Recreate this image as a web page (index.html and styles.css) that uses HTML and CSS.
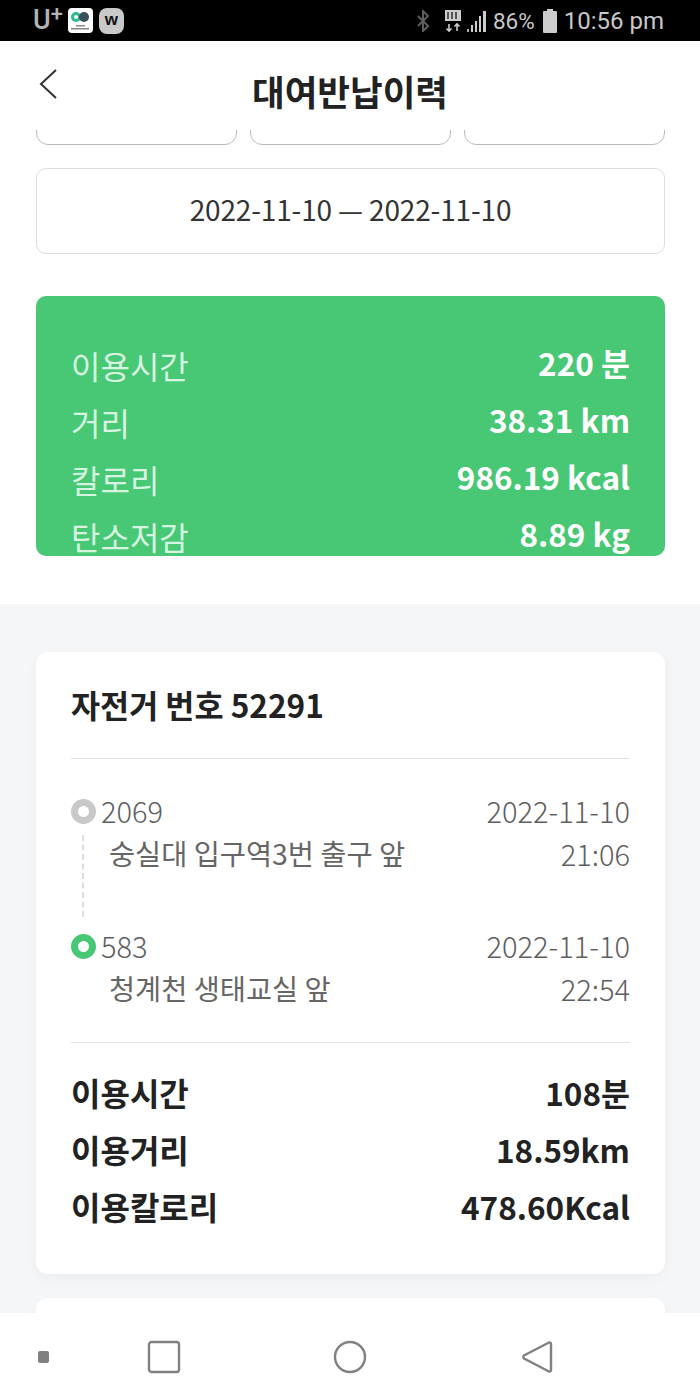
FILE: index.html
```html
<html>
    <head>
        <title>대여반납이력</title>
        <link rel="stylesheet" href="styles.css">
    </head>
    <body>
        <div class="status">
            <div class="status-left">
                <span class="carrier">U<sup>+</sup></span>
                <span class="app-icon">
                    <svg width="24" height="24" viewBox="0 0 24 24">
                        <circle cx="8" cy="8" r="5" fill="#2fb98c"/>
                        <circle cx="8" cy="8" r="2" fill="#fff"/>
                        <circle cx="16" cy="8" r="5" fill="#37505c"/>
                        <rect x="8" y="16" width="9" height="1.5" fill="#888"/>
                        <rect x="3" y="19" width="18" height="1.500" fill="#888"/>
                    </svg>
                </span>
                <span class="w-icon">w</span>
            </div>
            <div class="status-right">
                <svg class="bt" width="14" height="22" viewBox="0 0 14 22">
                    <path d="M2 6l10 10-5 5V1l5 5L2 16" fill="none" stroke="#5e5e5e" stroke-width="2"/>
                </svg>
                <svg class="lte" width="18" height="24" viewBox="0 0 18 24">
                    <rect x="1" y="1" width="16" height="11" fill="#ccc"/>
                    <path d="M4 3v7M8 3v7M12 3v7" stroke="#222" stroke-width="1.4"/>
                    <path d="M5 15v7M2.500 19.500L5 22l2.500-2.500M13 22v-7M10.500 17.500L13 15l2.500 2.500" fill="none" stroke="#ccc" stroke-width="1.6"/>
                </svg>
                <svg class="signal" width="20" height="22" viewBox="0 0 20 22">
                    <rect x="0" y="19" width="2" height="3" fill="#aaa"/>
                    <rect x="4" y="15" width="2" height="7" fill="#ccc"/>
                    <rect x="8" y="11" width="2" height="11" fill="#ccc"/>
                    <rect x="12" y="6" width="2" height="16" fill="#ccc"/>
                    <rect x="16" y="1" width="3" height="21" fill="#ccc"/>
                </svg>
                <span class="pct">86%</span>
                <svg class="battery" width="14" height="24" viewBox="0 0 14 24">
                    <path d="M4 0h6v2h3a1 1 0 0 1 1 1v20a1 1 0 0 1-1 1H1a1 1 0 0 1-1-1V3a1 1 0 0 1 1-1h3z" fill="#ccc"/>
                </svg>
                <span class="clock">10:56 pm</span>
            </div>
        </div>

        <div class="header">
            <svg class="back" width="20" height="32" viewBox="0 0 20 32">
                <path d="M18 2L3 16l15 14" fill="none" stroke="#333" stroke-width="2"/>
            </svg>
            <h1>대여반납이력</h1>
        </div>

        <div class="main">
            <div class="top">
                <div class="filters">
                    <div class="filter"></div>
                    <div class="filter"></div>
                    <div class="filter"></div>
                </div>
                <div class="date-box">2022-11-10 — 2022-11-10</div>
                <div class="total">
                    <div class="total-row"><span class="total-label">이용시간</span><b>220 분</b></div>
                    <div class="total-row"><span class="total-label">거리</span><b>38.31 km</b></div>
                    <div class="total-row"><span class="total-label">칼로리</span><b>986.19 kcal</b></div>
                    <div class="total-row"><span class="total-label">탄소저감</span><b>8.89 kg</b></div>
                </div>
            </div>

            <div class="list">
                <div class="card">
                    <div class="bike">자전거 번호 52291</div>
                    <div class="route">
                        <div class="stop">
                            <div class="stop-line">
                                <span class="dot dot-gray"></span>
                                <span class="stop-no">2069</span>
                                <span class="stop-date">2022-11-10</span>
                            </div>
                            <div class="stop-line stop-sub">
                                <span class="stop-name">숭실대 입구역3번 출구 앞</span>
                                <span class="stop-date">21:06</span>
                            </div>
                            <div class="dash"></div>
                        </div>
                        <div class="stop">
                            <div class="stop-line">
                                <span class="dot dot-green"></span>
                                <span class="stop-no">583</span>
                                <span class="stop-date">2022-11-10</span>
                            </div>
                            <div class="stop-line stop-sub">
                                <span class="stop-name">청계천 생태교실 앞</span>
                                <span class="stop-date">22:54</span>
                            </div>
                        </div>
                    </div>
                    <div class="summary">
                        <div class="summary-row"><span>이용시간</span><span class="summary-value">108분</span></div>
                        <div class="summary-row"><span>이용거리</span><span class="summary-value">18.59km</span></div>
                        <div class="summary-row"><span>이용칼로리</span><span class="summary-value">478.60Kcal</span></div>
                    </div>
                </div>
                <div class="card card-next"></div>
            </div>
        </div>

        <div class="nav">
            <span class="nav-dot"></span>
            <svg class="nav-square" width="34" height="34" viewBox="0 0 34 34">
                <rect x="2" y="2" width="30" height="30" rx="2.500" fill="none" stroke="#808080" stroke-width="2.400"/>
            </svg>
            <svg class="nav-circle" width="34" height="34" viewBox="0 0 34 34">
                <circle cx="17" cy="17" r="15" fill="none" stroke="#808080" stroke-width="2.400"/>
            </svg>
            <svg width="32" height="34" viewBox="0 0 32 34">
                <path d="M28 2.500a1.500 1.500 0 0 1 2 1.500v26a1.500 1.500 0 0 1-2 1.500L3 18.500a2 2 0 0 1 0-3z" fill="none" stroke="#808080" stroke-width="2.400"/>
            </svg>
        </div>
    </body>
</html>
```

FILE: styles.css
```css
body{
    margin: 0;
    width: 700px;
    height: 1400px;
    overflow: hidden;
    display: flex;
    flex-direction: column;
    background: #fff;
    font-family: "Noto Sans CJK KR", "Noto Sans", sans-serif;
    color: #222;
}

/* status bar */
.status{
    height: 41px;
    flex: none;
    background: #000;
    display: flex;
    justify-content: space-between;
    align-items: center;
    padding: 0 36px 0 33px;
    color: #c8c8c8;
}
.status-left, .status-right{
    display: flex;
    align-items: center;
}
.carrier{
    font-family: "Roboto", sans-serif;
    font-size: 27px;
    font-weight: 500;
    line-height: 41px;
    margin-right: 5px;
    color: #b4b4b4;
}
.carrier sup{
    font-size: 22px;
    font-weight: 500;
    line-height: 0;
    vertical-align: 8px;
}
.app-icon{
    width: 25px;
    height: 25px;
    background: #fff;
    border-radius: 4px;
    display: flex;
    align-items: center;
    justify-content: center;
    margin-right: 6px;
}
.w-icon{
    width: 25px;
    height: 26px;
    border-radius: 8px;
    background: #c9c9c9;
    color: #111;
    font: bold 17px/24px "Liberation Sans", sans-serif;
    text-align: center;
}
.bt{ margin-right: 14px; }
.lte{ margin-right: 5px; }
.signal{ margin-right: 6px; }
.pct{
    font: 22.500px "Roboto", sans-serif;
    margin-right: 8px;
}
.battery{ margin-right: 7px; }
.clock{
    font: 24px "Roboto", sans-serif;
}

/* title */
.header{
    height: 89px;
    flex: none;
    position: relative;
    display: flex;
    justify-content: center;
    padding-top: 26px;
    box-sizing: border-box;
}
.header h1{
    margin: 0;
    font-size: 35.500px;
    line-height: 48px;
    font-weight: 700;
    color: #222;
}
.back{
    position: absolute;
    left: 38px;
    top: 27px;
}

.main{
    flex: 1;
    overflow: hidden;
    min-height: 0;
}
.top{
    padding: 0 35px 48px 36px;
}
.filters{
    height: 15px;
    overflow: hidden;
    display: flex;
    gap: 13px;
    align-items: flex-end;
}
.filter{
    flex: 1;
    height: 60px;
    border: 1px solid #bbb;
    border-radius: 12px;
    box-sizing: border-box;
}
.date-box{
    margin-top: 23px;
    height: 86px;
    box-sizing: border-box;
    border: 1px solid #ddd;
    border-radius: 10px;
    display: flex;
    align-items: center;
    justify-content: center;
    padding-bottom: 4px;
    font-size: 28px;
    color: #333;
    letter-spacing: -0.150px;
}
.total{
    margin-top: 42px;
    height: 260px;
    box-sizing: border-box;
    padding: 38px 35px 0;
    background: #48c774;
    border-radius: 10px;
    overflow: hidden;
    color: #fff;
}
.total-row{
    height: 57px;
    display: flex;
    justify-content: space-between;
    align-items: center;
    font-size: 31.500px;
    line-height: 57px;
}
.total-label{
    margin-top: 5px;
    font-size: 32px;
    color: #d6f4e0;
    font-weight: 400;
}

/* usage cards */
.list{
    background: #f4f6f8;
    padding: 48px 35px 0 36px;
}
.card{
    background: #fff;
    border-radius: 12px;
    box-shadow: 0 4px 12px rgba(0, 0, 0, 0.04);
    padding: 0 35px;
    height: 622px;
    box-sizing: border-box;
}
.card-next{
    margin-top: 24px;
}
.bike{
    height: 107px;
    box-sizing: border-box;
    border-bottom: 1px solid #e2e2e2;
    font-size: 31.600px;
    font-weight: 700;
    line-height: 105px;
}
.route{
    padding-top: 29px;
    height: 284px;
    box-sizing: border-box;
    border-bottom: 1px solid #e2e2e2;
}
.stop{
    position: relative;
    height: 135px;
}
.stop-line{
    display: flex;
    align-items: center;
    justify-content: space-between;
    height: 43px;
    font-size: 29px;
    color: #5e5e5e;
    font-weight: 300;
}
.stop-no{
    flex: 1;
    margin-left: 5px;
}
.stop-name{
    font-size: 28.400px;
    font-weight: 400;
    color: #666;
}
.stop-sub{
    padding-left: 38px;
}
.dot{
    width: 25px;
    height: 25px;
    margin-top: 4px;
    box-sizing: border-box;
    border-radius: 50%;
    border: 7px solid;
    background: #fff;
}
.dot-gray{ border-color: #c8c8c8; }
.dot-green{ border-color: #48c774; }
.dash{
    position: absolute;
    left: 11px;
    top: 47px;
    height: 82px;
    border-left: 2px dashed #ddd;
}
.summary{
    padding-top: 20px;
}
.summary-row{
    height: 57px;
    display: flex;
    justify-content: space-between;
    align-items: center;
    font-size: 32px;
    font-weight: 700;
    color: #222;
}
.summary-value{
    font-size: 31.500px;
}

/* android nav */
.nav{
    height: 87px;
    flex: none;
    background: #fff;
    display: flex;
    align-items: center;
    padding-left: 38px;
}
.nav-dot{
    width: 11px;
    height: 12px;
    border-radius: 2px;
    background: #808080;
    margin-right: 98px;
}
.nav-square{ margin-right: 152px; }
.nav-circle{ margin-right: 154px; }
```
